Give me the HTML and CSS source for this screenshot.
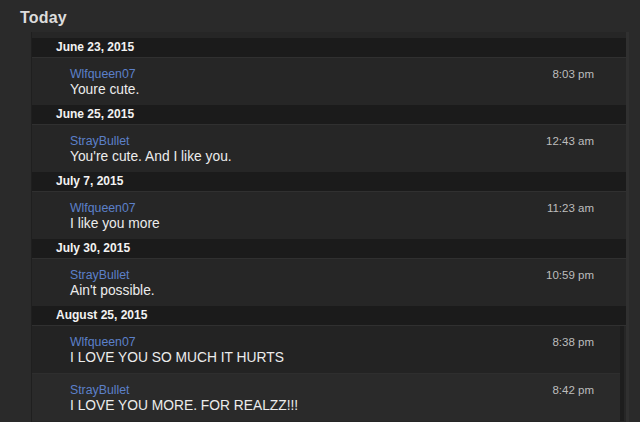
FILE: index.html
```html
<!DOCTYPE html>
<html lang="en">
<head>
    <meta charset="UTF-8">
    <meta name="viewport" content="width=device-width, initial-scale=1.0">
    <title>Messages - Today</title>
    <link rel="stylesheet" href="styles.css">
</head>
<body>
    <h2 class="page-title">Today</h2>

    <div class="thread">
        <div class="day">June 23, 2015</div>
        <div class="msg">
            <div class="msg-head">
                <span class="author">Wlfqueen07</span>
                <span class="time">8:03 pm</span>
            </div>
            <div class="body">Youre cute.</div>
        </div>

        <div class="day">June 25, 2015</div>
        <div class="msg">
            <div class="msg-head">
                <span class="author">StrayBullet</span>
                <span class="time">12:43 am</span>
            </div>
            <div class="body">You're cute. And I like you.</div>
        </div>

        <div class="day">July 7, 2015</div>
        <div class="msg">
            <div class="msg-head">
                <span class="author">Wlfqueen07</span>
                <span class="time">11:23 am</span>
            </div>
            <div class="body">I like you more</div>
        </div>

        <div class="day">July 30, 2015</div>
        <div class="msg">
            <div class="msg-head">
                <span class="author">StrayBullet</span>
                <span class="time">10:59 pm</span>
            </div>
            <div class="body">Ain't possible.</div>
        </div>

        <div class="day">August 25, 2015</div>
        <div class="scroll-list">
            <div class="msg msg-dark">
                <div class="msg-head">
                    <span class="author">Wlfqueen07</span>
                    <span class="time">8:38 pm</span>
                </div>
                <div class="body">I LOVE YOU SO MUCH IT HURTS</div>
            </div>
            <div class="msg msg-light">
                <div class="msg-head">
                    <span class="author">StrayBullet</span>
                    <span class="time">8:42 pm</span>
                </div>
                <div class="body">I LOVE YOU MORE. FOR REALZZ!!!</div>
            </div>
        </div>
    </div>
</body>
</html>
```

FILE: styles.css
```css
body {
    font-family: "Liberation Sans", Arial, sans-serif;
    margin: 0;
    height: 422px;
    overflow: hidden;
    background: #2a2a2a;
}
.page-title {
    margin: 0;
    padding: 7px 0 0 20px;
    height: 25px;
    font-size: 16px;
    font-weight: bold;
    line-height: 22px;
    color: #dcdcdc;
    letter-spacing: 0.2px;
}
.thread {
    margin-left: 31px;
    width: 594px;
    padding-top: 6px;
    background: #262626;
    border-left: 1px solid #1f1f1f;
    border-right: 3px solid #303030;
    min-height: 400px;
}
.day {
    height: 19px;
    line-height: 19px;
    padding-left: 24px;
    font-size: 12px;
    font-weight: bold;
    color: #f2f2f2;
    background: #1b1b1b;
    border-bottom: 1px solid #303030;
}
.msg {
    height: 47px;
    padding: 9px 32px 0 38px;
    box-sizing: border-box;
    background: #262626;
}
.msg-head {
    display: flex;
    justify-content: space-between;
    height: 14px;
    line-height: 14px;
}
.author {
    font-size: 12.3px;
    color: #5c80c9;
}
.time {
    font-size: 11.5px;
    color: #bdbdbd;
}
.body {
    margin-top: 1px;
    font-size: 13.8px;
    line-height: 16px;
    color: #ececec;
}
.scroll-list {
    margin-right: 2px;
    border-right: 4px solid #1d1d1d;
}
.scroll-list .msg {
    padding-right: 26px;
}
.msg-dark {
    background: #232323;
}
.msg-light {
    background: #2a2a2a;
    border-top: 1px solid #2e2e2e;
    height: 48px;
}
```
